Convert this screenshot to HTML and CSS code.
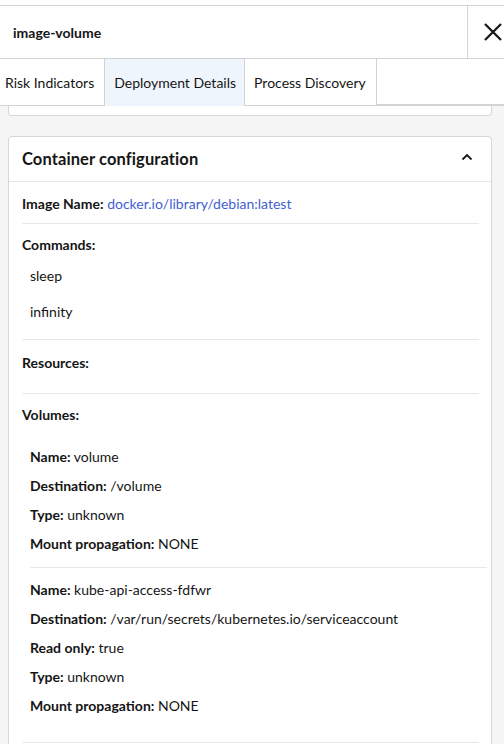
FILE: index.html
```html
<!DOCTYPE html>
<html>
<head>
<meta charset="utf-8">
<link rel="stylesheet" href="styles.css">
</head>
<body>
<div class="panel">
  <div class="topgap"></div>
  <header class="header">
    <div class="title">image-volume</div>
    <button class="close" aria-label="Close">
      <svg width="20" height="20" viewBox="0 0 20 20"><path d="M2 2 L18 18 M18 2 L2 18" stroke="#151515" stroke-width="2.2" fill="none"/></svg>
    </button>
  </header>
  <nav class="tabs">
    <div class="tab">Risk Indicators</div>
    <div class="tab active">Deployment Details</div>
    <div class="tab">Process Discovery</div>
    <div class="tabfill"></div>
  </nav>
  <main class="content">
    <div class="card prev"></div>
    <section class="card">
      <div class="card-head">
        <h2>Container configuration</h2>
        <svg class="chev" width="12" height="8" viewBox="0 0 12 8"><path d="M1.5 6.5 L6 2 L10.5 6.5" stroke="#151515" stroke-width="1.8" fill="none"/></svg>
      </div>
      <div class="card-body">
        <div class="row"><b>Image Name:</b> <a class="link">docker.io/library/debian:latest</a></div>
        <div class="row block cmds">
          <b>Commands:</b>
          <div class="cmd">sleep</div>
          <div class="cmd">infinity</div>
        </div>
        <div class="row block res"><b>Resources:</b></div>
        <div class="row block vols">
          <b>Volumes:</b>
          <div class="vol first">
            <div class="kv"><b>Name:</b> volume</div>
            <div class="kv"><b>Destination:</b> /volume</div>
            <div class="kv"><b>Type:</b> unknown</div>
            <div class="kv"><b>Mount propagation:</b> NONE</div>
          </div>
          <div class="vol">
            <div class="kv"><b>Name:</b> kube-api-access-fdfwr</div>
            <div class="kv"><b>Destination:</b> /var/run/secrets/kubernetes.io/serviceaccount</div>
            <div class="kv"><b>Read only:</b> true</div>
            <div class="kv"><b>Type:</b> unknown</div>
            <div class="kv"><b>Mount propagation:</b> NONE</div>
          </div>
        </div>
      </div>
    </section>
  </main>
</div>
</body>
</html>
```
FILE: styles.css
```css
* { box-sizing: border-box; }
html, body { margin: 0; padding: 0; }
body {
  font-family: "Lato", "Liberation Sans", sans-serif;
  color: #151515;
  background: #fff;
  width: 504px;
  height: 744px;
  overflow: hidden;
}
.topgap { height: 6px; background: #fff; border-bottom: 1px solid #d2d2d2; }
.header {
  display: flex;
  align-items: stretch;
  height: 53px;
  border-bottom: 1px solid #d2d2d2;
}
.title {
  flex: 1;
  display: flex;
  align-items: center;
  padding-left: 13px;
  font-weight: 700;
  font-size: 14px;
}
.close {
  width: 37px;
  border: 0;
  border-left: 1px solid #d2d2d2;
  background: #fff;
  padding: 0 0 0 15px;
  display: flex;
  align-items: center;
  justify-content: flex-start;
}
.tabs {
  display: flex;
  height: 47px;
}
.tab {
  display: flex;
  align-items: center;
  padding: 0 10px 0 5px;
  font-size: 14px;
  border-right: 1px solid #d2d2d2;
  border-bottom: 1px solid #d2d2d2;
  background: #fff;
}
.tab:nth-child(2) { padding: 0 8px 0 9px; }
.tab:nth-child(3) { padding: 0 10px 0 9px; }
.tab.active { background: #eff5fc; border-bottom-color: #eff5fc; }
.tabfill {
  flex: 1;
  border-bottom: 2px solid #d2d2d2;
  background: #fff;
}
.content {
  background: #f5f5f5;
  padding: 0 12px 40px 8px;
}
.card {
  background: #fff;
  border: 1px solid #d6d6d6;
  border-radius: 4px;
}
.card.prev {
  height: 10px;
  border-top: 0;
  border-radius: 0 0 4px 4px;
  margin-bottom: 20px;
}
.card-head {
  display: flex;
  align-items: center;
  justify-content: space-between;
  height: 45px;
  padding: 0 18px 0 13px;
  border-bottom: 1px solid #e6e6e6;
}
.card-head h2 {
  margin: 0;
  font-size: 16.5px;
  font-weight: 700;
  letter-spacing: 0.1px;
}
.chev { margin-top: -4px; }
.card-body { padding: 0 12px 40px 13px; }
.row {
  font-size: 14px;
  padding: 13px 0 11px;
  border-bottom: 1px solid #e8e8e8;
}
.row.block { padding: 12px 0 14px; }
.row.cmds { padding-bottom: 19px; }
.cmd { padding: 0 0 0 8px; margin-top: 14px; }
.cmd + .cmd { margin-top: 19px; }
.row.res { padding-top: 14px; padding-bottom: 22px; }
.row.vols { padding-bottom: 28px; }
.link { color: #3f5fd1; text-decoration: none; }
.vol { margin: 0 -8px 0 8px; }
.vol.first { padding-bottom: 15px; border-bottom: 1px solid #e8e8e8; margin-top: 25px; }
.vol + .vol { margin-top: 13px; }
.kv { line-height: 17px; margin-bottom: 12px; }
.kv:last-child { margin-bottom: 0; }
```
